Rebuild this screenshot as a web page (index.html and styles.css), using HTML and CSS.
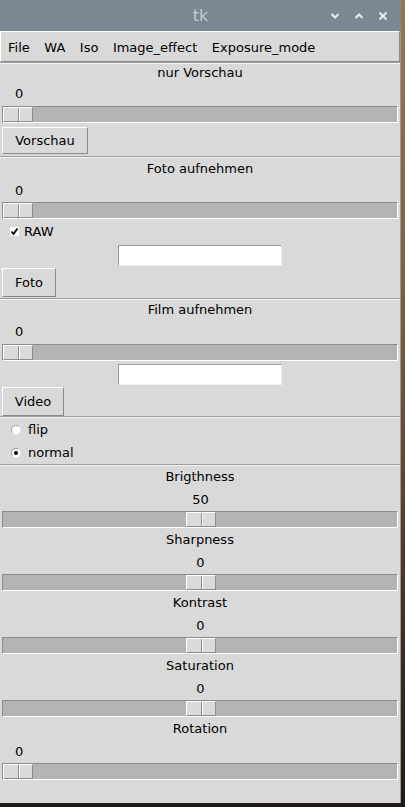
FILE: index.html
```html
<!DOCTYPE html>
<html>
<head>
<meta charset="utf-8">
<link rel="stylesheet" href="styles.css">
</head>
<body>
<div class="window">
  <div class="titlebar">
    <span class="title">tk</span>
    <div class="controls">
      <svg class="ctl" width="10" height="8" viewBox="0 0 10 8"><path d="M1.5 2 L5 5.5 L8.5 2" fill="none" stroke="#e4e8ec" stroke-width="2.2"/></svg>
      <svg class="ctl" width="10" height="8" viewBox="0 0 10 8"><path d="M1.5 6 L5 2.5 L8.5 6" fill="none" stroke="#e4e8ec" stroke-width="2.2"/></svg>
      <svg class="ctl" width="10" height="10" viewBox="0 0 10 10"><path d="M1.5 1.5 L8.5 8.5 M8.5 1.5 L1.5 8.5" fill="none" stroke="#e4e8ec" stroke-width="2.2"/></svg>
    </div>
  </div>
  <div class="menubar">
    <span class="mitem">File</span>
    <span class="mitem">WA</span>
    <span class="mitem">Iso</span>
    <span class="mitem">Image_effect</span>
    <span class="mitem">Exposure_mode</span>
  </div>
  <div class="sep"></div>

  <div class="section s1">
    <div class="label l18">nur Vorschau</div>
    <div class="value v24 start">0</div>
    <div class="trough"><div class="thumb start"></div></div>
    <div class="btn b-vorschau">Vorschau</div>
  </div>
  <div class="sep"></div>

  <div class="section s2">
    <div class="label l22">Foto aufnehmen</div>
    <div class="value v22 start">0</div>
    <div class="trough"><div class="thumb start"></div></div>
    <div class="check-row">
      <span class="checkbox"><svg width="9" height="9" viewBox="0 0 9 9"><path d="M1.5 4.5 L3.5 7 L7.5 1.5" fill="none" stroke="#000" stroke-width="1.8"/></svg></span>
      <span class="check-text">RAW</span>
    </div>
    <div class="entry-row"><div class="entry"></div></div>
    <div class="btn b-foto">Foto</div>
  </div>
  <div class="sep"></div>

  <div class="section s3">
    <div class="label l20">Film aufnehmen</div>
    <div class="value v24 start">0</div>
    <div class="trough"><div class="thumb start"></div></div>
    <div class="entry-row e3"><div class="entry"></div></div>
    <div class="btn b-video">Video</div>
  </div>
  <div class="sep"></div>

  <div class="section s-radio">
    <div class="radio-row">
      <svg class="radio" width="10" height="10" viewBox="0 0 10 10"><circle cx="5" cy="5" r="4.5" fill="#fff"/><path d="M1.2 7.5 A4.5 4.5 0 0 1 7.5 1.2" fill="none" stroke="#9a9a9a" stroke-width="1"/></svg>
      <span>flip</span>
    </div>
    <div class="radio-row">
      <svg class="radio" width="10" height="10" viewBox="0 0 10 10"><circle cx="5" cy="5" r="4.5" fill="#fff"/><path d="M1.2 7.5 A4.5 4.5 0 0 1 7.5 1.2" fill="none" stroke="#9a9a9a" stroke-width="1"/><circle cx="5" cy="5" r="2" fill="#000"/></svg>
      <span>normal</span>
    </div>
  </div>
  <div class="sep"></div>

  <div class="section s4">
    <div class="scale">
      <div class="label l22">Brigthness</div>
      <div class="value v23 mid">50</div>
      <div class="trough"><div class="thumb mid"></div></div>
    </div>
    <div class="scale">
      <div class="label l22">Sharpness</div>
      <div class="value v23 mid">0</div>
      <div class="trough"><div class="thumb mid"></div></div>
    </div>
    <div class="scale">
      <div class="label l22">Kontrast</div>
      <div class="value v23 mid">0</div>
      <div class="trough"><div class="thumb mid"></div></div>
    </div>
    <div class="scale">
      <div class="label l22">Saturation</div>
      <div class="value v23 mid">0</div>
      <div class="trough"><div class="thumb mid"></div></div>
    </div>
    <div class="scale">
      <div class="label l22">Rotation</div>
      <div class="value v23 start">0</div>
      <div class="trough"><div class="thumb start"></div></div>
    </div>
  </div>
</div>
</body>
</html>
```

FILE: styles.css
```css
html, body {
  margin: 0;
  padding: 0;
}
body {
  width: 405px;
  height: 807px;
  overflow: hidden;
  background: linear-gradient(to bottom, #9a7650 0%, #7a5c3e 40%, #3a2e26 80%, #211b17 100%);
  font-family: "DejaVu Sans", sans-serif;
  font-size: 13px;
  color: #000;
}
.window {
  width: 400px;
  height: 803px;
  background: #d9d9d9;
  border-right: 1px solid #9a9a9a;
  display: flex;
  flex-direction: column;
}
.titlebar {
  height: 31px;
  flex-shrink: 0;
  background: #7b8793;
  position: relative;
  display: flex;
  align-items: center;
  justify-content: center;
  width: 401px;
}
.title {
  color: #c3cad1;
  font-family: "DejaVu Sans", sans-serif;
  font-size: 16px;
  margin-top: -1px;
}
.controls {
  position: absolute;
  right: 13px;
  top: 11px;
  display: flex;
  align-items: center;
  gap: 14px;
}
.ctl { display: block; }
.menubar {
  height: 28px;
  flex-shrink: 0;
  border-top: 1px solid #ffffff;
  border-left: 1px solid #ffffff;
  border-bottom: 1px solid #8a8a8a;
  border-right: 1px solid #8a8a8a;
  display: flex;
  align-items: center;
  gap: 14.5px;
  padding-left: 7px;
  padding-top: 1px;
  box-sizing: content-box;
  width: 391px;
}
.mitem { white-space: pre; }
.sep {
  height: 1px;
  flex-shrink: 0;
  border-top: 1px solid #9c9c9c;
  background: #f4f4f4;
}
.section {
  display: flex;
  flex-direction: column;
}
.label {
  text-align: center;
}
.l18 { height: 18px; line-height: 18px; }
.l20 { height: 20px; line-height: 20px; }
.l22 { height: 22px; line-height: 22px; }
.value { position: relative; }
.v22 { height: 22px; line-height: 22px; }
.v23 { height: 23px; line-height: 23px; }
.v24 { height: 24px; line-height: 24px; }
.value.start { padding-left: 15px; }
.value.mid { text-align: center; padding-left: 1px; }
.trough {
  margin: 0 2px;
  height: 15px;
  flex-shrink: 0;
  background: #b3b3b3;
  border-top: 1px solid #8c8c8c;
  border-left: 1px solid #8c8c8c;
  border-bottom: 1px solid #ffffff;
  border-right: 1px solid #ffffff;
  position: relative;
  width: 394px;
}
.thumb {
  position: absolute;
  top: 0;
  width: 30px;
  height: 15px;
  box-sizing: border-box;
  background:
    linear-gradient(to right, transparent 14px, #8c8c8c 14px, #8c8c8c 15px, #ffffff 15px, #ffffff 16px, transparent 16px),
    #dadada;
  border-top: 1px solid #ffffff;
  border-left: 1px solid #ffffff;
  border-bottom: 1px solid #8c8c8c;
  border-right: 1px solid #8c8c8c;
}
.thumb.start { left: 0; }
.thumb.mid { left: 183px; }
.btn {
  align-self: flex-start;
  margin-left: 2px;
  box-sizing: border-box;
  background: #d9d9d9;
  border-top: 1px solid #ffffff;
  border-left: 1px solid #ffffff;
  border-bottom: 1px solid #8a8a8a;
  border-right: 1px solid #8a8a8a;
  display: flex;
  align-items: center;
  justify-content: center;
}
.b-vorschau { width: 86px; height: 27px; margin-top: 4px; margin-bottom: 2px; }
.b-foto { width: 54px; height: 29px; margin-top: 2px; margin-bottom: 1px; }
.b-video { width: 62px; height: 29px; margin-top: 2px; margin-bottom: 0; }
.check-row {
  height: 24px;
  display: flex;
  align-items: center;
  padding-left: 10px;
}
.checkbox {
  width: 9px;
  height: 9px;
  background: #fff;
  display: inline-flex;
  align-items: center;
  justify-content: center;
  margin-right: 5px;
}
.checkbox svg { display: block; }
.entry-row {
  display: flex;
  justify-content: flex-start;
  padding-left: 118px;
  margin-top: 2px;
}
.e3 { margin-top: 3px; }
.entry {
  width: 162px;
  height: 19px;
  background: #ffffff;
  border-top: 1px solid #9a9a9a;
  border-left: 1px solid #9a9a9a;
  border-bottom: 1px solid #f0f0f0;
  border-right: 1px solid #f0f0f0;
}
.radio-row {
  display: flex;
  align-items: center;
  padding-left: 11px;
  gap: 7px;
  height: 23px;
}
.radio { display: block; }
.scale {
  display: flex;
  flex-direction: column;
  margin-bottom: 1px;
}
```
